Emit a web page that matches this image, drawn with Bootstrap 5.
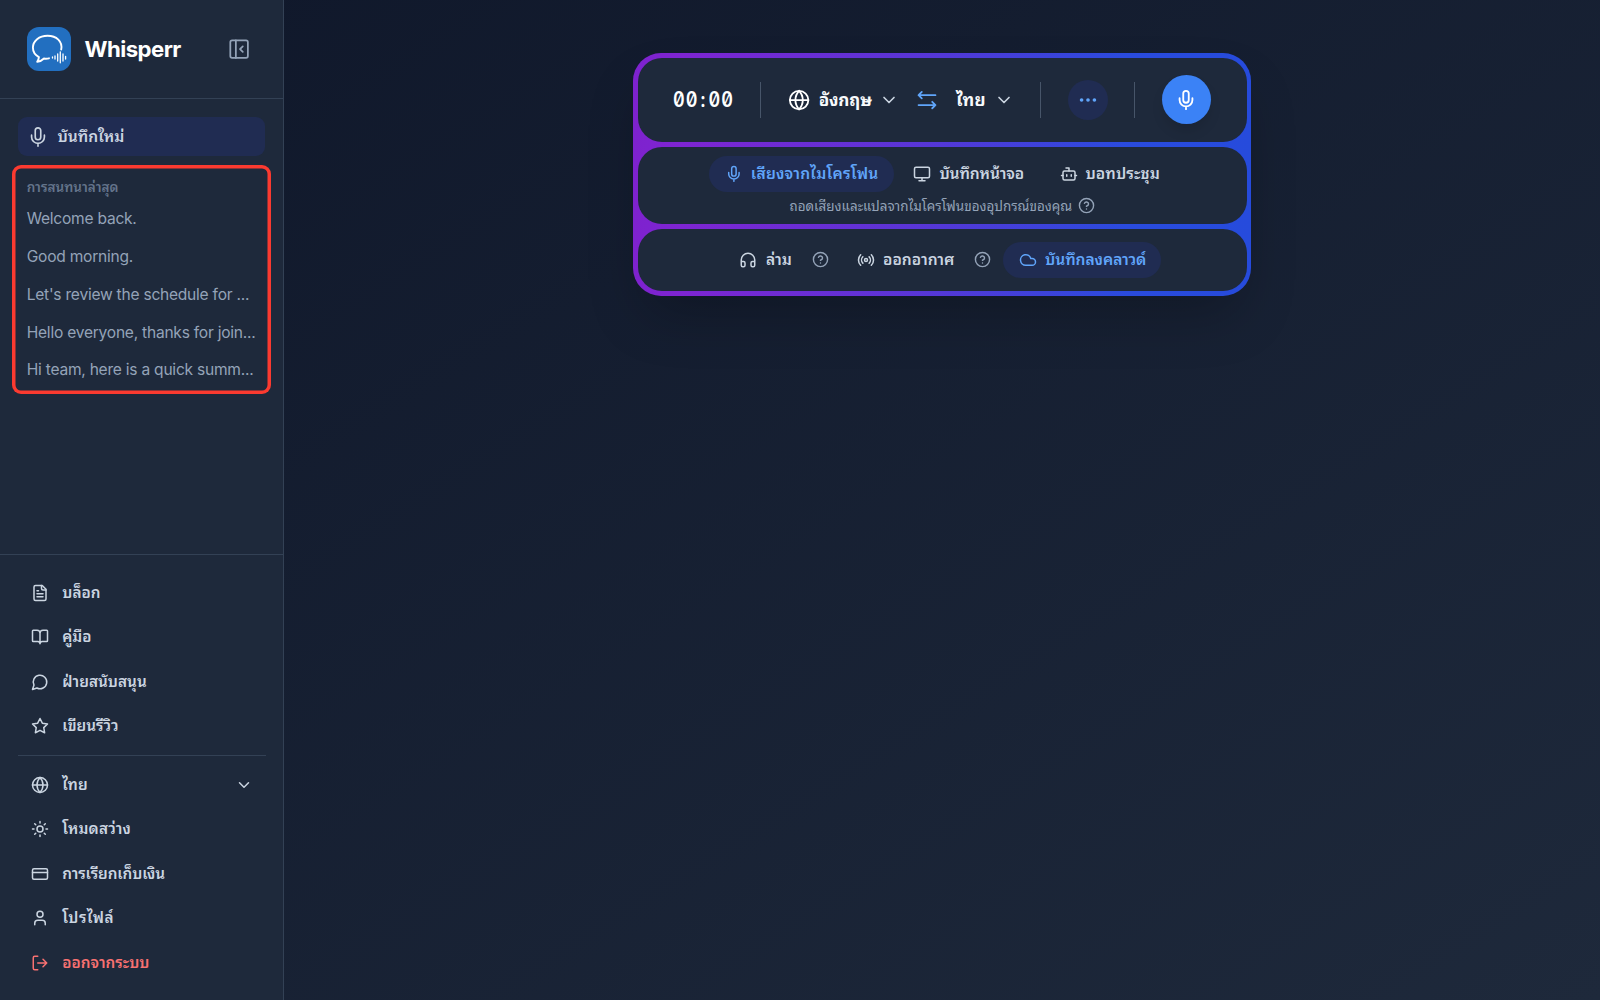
<!DOCTYPE html>
<html lang="th">
<head>
<meta charset="utf-8">
<meta name="viewport" content="width=device-width, initial-scale=1">
<title>Whisperr</title>
<link rel="stylesheet" href="https://cdn.jsdelivr.net/npm/bootstrap@5.3.0/dist/css/bootstrap.min.css">
<style>
:root{--line:#334155;--panel:#1e293b;--soft:#cbd5e1;--muted:#94a3b8;--accent:#60a5fa;--tint:#202c52}
html,body{height:100%}
body{font-family:Inter,"Noto Sans Thai Looped",Loma,Waree,Garuda,"Noto Looped Thai","Noto Sans Thai","Noto Sans",sans-serif;background:linear-gradient(to bottom right,#0f172a,#1e293b);color:var(--soft);overflow:hidden;font-size:15.55px}
svg{fill:none;stroke:currentColor;stroke-width:2;stroke-linecap:round;stroke-linejoin:round;flex:none;display:block}
.side{width:284px;background:var(--panel);border-right:1px solid var(--line)}
.brand-row{height:98.5px;border-bottom:1px solid var(--line);padding:0 33px 0 26.5px}
.logo{width:44.5px;height:44.5px;border-radius:12px;background:#226fc0}
.brand-name{font-size:22.2px;font-weight:700;color:#fff;letter-spacing:-.55px;margin-left:13.5px}
.new-rec{margin:18.5px 18px 0 17.5px;height:39px;border-radius:9px;background:var(--tint);padding-left:9px}
.t{white-space:nowrap;flex:none;font-weight:600;line-height:24px}
.recent{margin:8.5px 12px 0;height:229.5px;border-radius:9px;box-shadow:inset 0 0 0 3.5px #fb3a30;padding:12.5px 14px 0 14.7px}
.recent-title{font-size:13.5px;color:#64748b;font-weight:600;line-height:20px;margin-bottom:3.3px}
.recent-item{height:37.8px;line-height:37.8px;color:var(--muted);letter-spacing:-.23px}
.bottom-nav{border-top:1px solid var(--line);padding:16px 17.5px 0;height:446.5px}
.item{height:44.45px;padding:0 13px 0 13.3px}
.item .t{margin-left:13.5px;font-size:15.3px}
.sep{height:1px;background:var(--line);margin:6.5px 0 7px}
.out{color:#f87171}
.deck{width:618px;height:243px;margin:53px 0 0 349px;padding:4.5px;border-radius:28px;background:linear-gradient(to right,#7e22ce,#7e25d2 8%,#5a35d6 45%,#2a4bdd 80%,#264bdc);box-shadow:0 28px 55px -13px rgba(0,0,0,.25);gap:4.5px}
.deck section{background:var(--panel);border-radius:24px}
.p1{height:84.5px}.p2{height:77.5px}.p3{height:62.5px}
.timer{width:60px}
.timer b{display:inline-block;font-size:20.8px;font-weight:600;color:#fff;font-feature-settings:"tnum","zero";transform:translateY(1px) scaleX(.87);transform-origin:0 50%;letter-spacing:1.1px}
.timer i{font-style:normal;margin:0 2.5px}
.rule{width:1px;height:36px;background:#475569}
.lang{font-size:17.1px;color:#f8fafc;font-weight:700}
.dots{width:40px;height:40px;background:var(--tint);color:var(--accent)}
.mic{width:49px;height:49px;background:#3b82f6;color:#fff;box-shadow:0 8px 14px -3px rgba(0,0,0,.15)}
.pill{height:36px;border-radius:18px}
.pill.on{background:var(--tint);color:var(--accent)}
.hint{font-size:13.45px;color:var(--muted)}
.q{color:var(--muted)}
</style>
<script src="https://cdn.jsdelivr.net/npm/bootstrap@5.3.0/dist/js/bootstrap.bundle.min.js"></script>
</head>
<body class="d-flex">
<svg width="0" height="0" class="position-absolute">
<defs>
<symbol id="mic" viewBox="0 0 24 24"><path d="M12 2a3 3 0 0 0-3 3v7a3 3 0 0 0 6 0V5a3 3 0 0 0-3-3Z"/><path d="M19 10v2a7 7 0 0 1-14 0v-2M12 19v3"/></symbol>
<symbol id="globe" viewBox="0 0 24 24"><circle cx="12" cy="12" r="10"/><path d="M12 2a14.5 14.5 0 0 0 0 20 14.5 14.5 0 0 0 0-20M2 12h20"/></symbol>
<symbol id="chev" viewBox="0 0 24 24"><path d="m6 9 6 6 6-6"/></symbol>
<symbol id="help" viewBox="0 0 24 24"><circle cx="12" cy="12" r="10"/><path d="M9.09 9a3 3 0 0 1 5.83 1c0 2-3 3-3 3M12 17h.01"/></symbol>
</defs>
</svg>
<aside class="side vh-100 d-flex flex-column flex-shrink-0">
  <header class="brand-row d-flex align-items-center">
    <div class="logo flex-shrink-0"><svg width="44.5" height="44.5" viewBox="0 0 44.5 44.5" style="stroke:#fff;stroke-width:1.9"><path d="M34.2 22.5C35.8 14.6 29.5 8.8 20.6 8.8 12.1 8.8 5.9 13.8 5.9 20.6c0 4.300 2.400 7.600 6 9.500-.1 1.800-.7 3.300-1.700 4.700 2.900-.3 5-1.500 6.800-3.300 1.500.3 3.100.3 5-.2"/><path style="stroke-width:1.3" d="M25.5 30v1M28 29v3M30.700 27v7M33.300 24.800v11M36 27v7M38.600 29.500v2.500"/></svg></div>
    <span class="brand-name">Whisperr</span>
    <svg class="ms-auto q" width="22.2" height="22.2" viewBox="0 0 24 24" style="stroke-width:1.9"><rect x="2.5" y="2.5" width="19" height="19" rx="2"/><path d="M8.500 2.500v19M16 9l-3 3 3 3"/></svg>
  </header>
  <div class="new-rec d-flex align-items-center flex-shrink-0"><svg width="22" height="22" style="stroke-width:1.8"><use href="#mic"/></svg><span class="t" style="margin-left:9px">บันทึกใหม่</span></div>
  <div class="recent flex-shrink-0">
    <div class="recent-title">การสนทนาล่าสุด</div>
    <div class="recent-item text-nowrap">Welcome back.</div>
    <div class="recent-item text-nowrap">Good morning.</div>
    <div class="recent-item text-nowrap">Let's review the schedule for ...</div>
    <div class="recent-item text-nowrap">Hello everyone, thanks for join...</div>
    <div class="recent-item text-nowrap">Hi team, here is a quick summ...</div>
  </div>
  <nav class="bottom-nav mt-auto flex-shrink-0">
    <div class="item d-flex align-items-center"><svg width="18" height="18" viewBox="0 0 24 24"><path d="M15 2H6a2 2 0 0 0-2 2v16a2 2 0 0 0 2 2h12a2 2 0 0 0 2-2V7Z"/><path d="M14 2v4a2 2 0 0 0 2 2h4M10 9H8M16 13H8M16 17H8"/></svg><span class="t">บล็อก</span></div>
    <div class="item d-flex align-items-center"><svg width="18" height="18" viewBox="0 0 24 24"><path d="M12 7v14M3 18a1 1 0 0 1-1-1V4a1 1 0 0 1 1-1h5a4 4 0 0 1 4 4 4 4 0 0 1 4-4h5a1 1 0 0 1 1 1v13a1 1 0 0 1-1 1h-6a3 3 0 0 0-3 3 3 3 0 0 0-3-3z"/></svg><span class="t">คู่มือ</span></div>
    <div class="item d-flex align-items-center"><svg width="18" height="18" viewBox="0 0 24 24"><path d="M7.900 20A9 9 0 1 0 4 16.100L2 22Z"/></svg><span class="t">ฝ่ายสนับสนุน</span></div>
    <div class="item d-flex align-items-center"><svg width="18" height="18" viewBox="0 0 24 24"><path d="m12 2 3.090 6.260L22 9.270l-5 4.870 1.180 6.880L12 17.770l-6.180 3.250L7 14.140 2 9.270l6.910-1.010Z"/></svg><span class="t">เขียนรีวิว</span></div>
    <div class="sep"></div>
    <div class="item d-flex align-items-center"><svg width="18" height="18"><use href="#globe"/></svg><span class="t">ไทย</span><svg class="ms-auto" width="18" height="18"><use href="#chev"/></svg></div>
    <div class="item d-flex align-items-center"><svg width="18" height="18" viewBox="0 0 24 24"><circle cx="12" cy="12" r="4"/><path d="M12 2v2M12 20v2M4.930 4.930l1.410 1.410M17.660 17.660l1.410 1.410M2 12h2M20 12h2M6.340 17.660l-1.410 1.410M19.070 4.930l-1.410 1.410"/></svg><span class="t" style="letter-spacing:.15px">โหมดสว่าง</span></div>
    <div class="item d-flex align-items-center"><svg width="18" height="18" viewBox="0 0 24 24"><rect width="20" height="14" x="2" y="5" rx="2"/><path d="M2 10h20"/></svg><span class="t" style="letter-spacing:-.1px">การเรียกเก็บเงิน</span></div>
    <div class="item d-flex align-items-center"><svg width="18" height="18" viewBox="0 0 24 24"><path d="M19 21v-2a4 4 0 0 0-4-4H9a4 4 0 0 0-4 4v2"/><circle cx="12" cy="7" r="4"/></svg><span class="t" style="letter-spacing:.5px">โปรไฟล์</span></div>
    <div class="item out d-flex align-items-center"><svg width="18" height="18" viewBox="0 0 24 24"><path d="M9 21H5a2 2 0 0 1-2-2V5a2 2 0 0 1 2-2h4M16 17l5-5-5-5M21 12H9"/></svg><span class="t">ออกจากระบบ</span></div>
  </nav>
</aside>
<main class="flex-grow-1">
  <div class="deck d-flex flex-column">
    <section class="p1 d-flex align-items-center">
      <span class="t timer" style="margin-left:35.5px"><b>00<i>:</i>00</b></span>
      <i class="rule" style="margin-left:27px"></i>
      <svg width="22.2" height="22.2" style="margin-left:27px;color:#fff"><use href="#globe"/></svg>
      <span class="t lang" style="margin-left:8.5px;width:53.5px;letter-spacing:-.2px">อังกฤษ</span>
      <svg width="20" height="20" style="margin-left:7px"><use href="#chev"/></svg>
      <svg width="22" height="22" viewBox="0 0 24 24" style="margin-left:17px;color:#60a5fa"><path d="M6.300 3.200 2.800 6.700l3.500 3.500M2.800 6.700h18.400M17.700 14l3.500 3.500-3.500 3.500M21.200 17.500H2.800"/></svg>
      <span class="t lang" style="margin-left:18px;width:31px;letter-spacing:.3px">ไทย</span>
      <svg width="20" height="20" style="margin-left:7px"><use href="#chev"/></svg>
      <i class="rule" style="margin-left:26px"></i>
      <span class="dots rounded-circle d-flex align-items-center justify-content-center" style="margin-left:26.5px"><svg width="22" height="22" viewBox="0 0 24 24"><g fill="currentColor"><circle cx="12" cy="12" r="1"/><circle cx="19" cy="12" r="1"/><circle cx="5" cy="12" r="1"/></g></svg></span>
      <i class="rule" style="margin-left:26.5px"></i>
      <span class="mic rounded-circle d-flex align-items-center justify-content-center" style="margin-left:26.5px"><svg width="22" height="22"><use href="#mic"/></svg></span>
    </section>
    <section class="p2">
      <div class="d-flex align-items-center" style="padding:9px 0 0 71.5px">
        <div class="pill on d-flex align-items-center" style="width:184.5px;padding-left:15.5px"><svg width="17.8" height="17.8"><use href="#mic"/></svg><span class="t" style="margin-left:8.5px;letter-spacing:.2px">เสียงจากไมโครโฟน</span></div>
        <div class="pill d-flex align-items-center" style="width:147px;padding-left:19.5px"><svg width="18" height="18" viewBox="0 0 24 24"><rect width="20" height="14" x="2" y="3" rx="2"/><path d="M8 21h8M12 17v4"/></svg><span class="t" style="margin-left:8.5px;letter-spacing:-.15px">บันทึกหน้าจอ</span></div>
        <div class="pill d-flex align-items-center" style="padding-left:19px"><svg width="18" height="18" viewBox="0 0 24 24"><path d="M12 8V4H8"/><rect width="16" height="12" x="4" y="8" rx="2"/><path d="M2 14h2M20 14h2M15 13v2M9 13v2"/></svg><span class="t" style="margin-left:8px;letter-spacing:.1px">บอทประชุม</span></div>
      </div>
      <div class="d-flex align-items-center" style="padding:2px 0 0 152px"><span class="t hint" style="width:283px;font-weight:400">ถอดเสียงและแปลจากไมโครโฟนของอุปกรณ์ของคุณ</span><svg class="q" width="17" height="17" style="margin-left:5.5px"><use href="#help"/></svg></div>
    </section>
    <section class="p3 d-flex align-items-center">
      <svg width="18" height="18" viewBox="0 0 24 24" style="margin-left:101.5px"><path d="M3 14h3a2 2 0 0 1 2 2v3a2 2 0 0 1-2 2H5a2 2 0 0 1-2-2v-7a9 9 0 0 1 18 0v7a2 2 0 0 1-2 2h-1a2 2 0 0 1-2-2v-3a2 2 0 0 1 2-2h3"/></svg>
      <span class="t" style="margin-left:9px;width:27px">ล่าม</span>
      <svg class="q" width="17" height="17" style="margin-left:19px"><use href="#help"/></svg>
      <svg width="18" height="18" viewBox="0 0 24 24" style="margin-left:28px"><path d="M4.900 19.100C1 15.200 1 8.800 4.900 4.900M7.800 16.200c-2.300-2.300-2.300-6.100 0-8.500"/><circle cx="12" cy="12" r="2"/><path d="M16.200 7.800c2.300 2.300 2.300 6.100 0 8.500M19.100 4.900C23 8.800 23 15.100 19.100 19"/></svg>
      <span class="t" style="margin-left:8px;width:72px">ออกอากาศ</span>
      <svg class="q" width="17" height="17" style="margin-left:19px"><use href="#help"/></svg>
      <div class="pill on d-flex align-items-center" style="margin-left:12px;width:158px;padding-left:16px"><svg width="18" height="18" viewBox="0 0 24 24"><path d="M17.500 19H9a7 7 0 1 1 6.710-9h1.790a4.500 4.500 0 1 1 0 9Z"/></svg><span class="t" style="margin-left:8px;letter-spacing:-.05px">บันทึกลงคลาวด์</span></div>
    </section>
  </div>
</main>
</body>
</html>
